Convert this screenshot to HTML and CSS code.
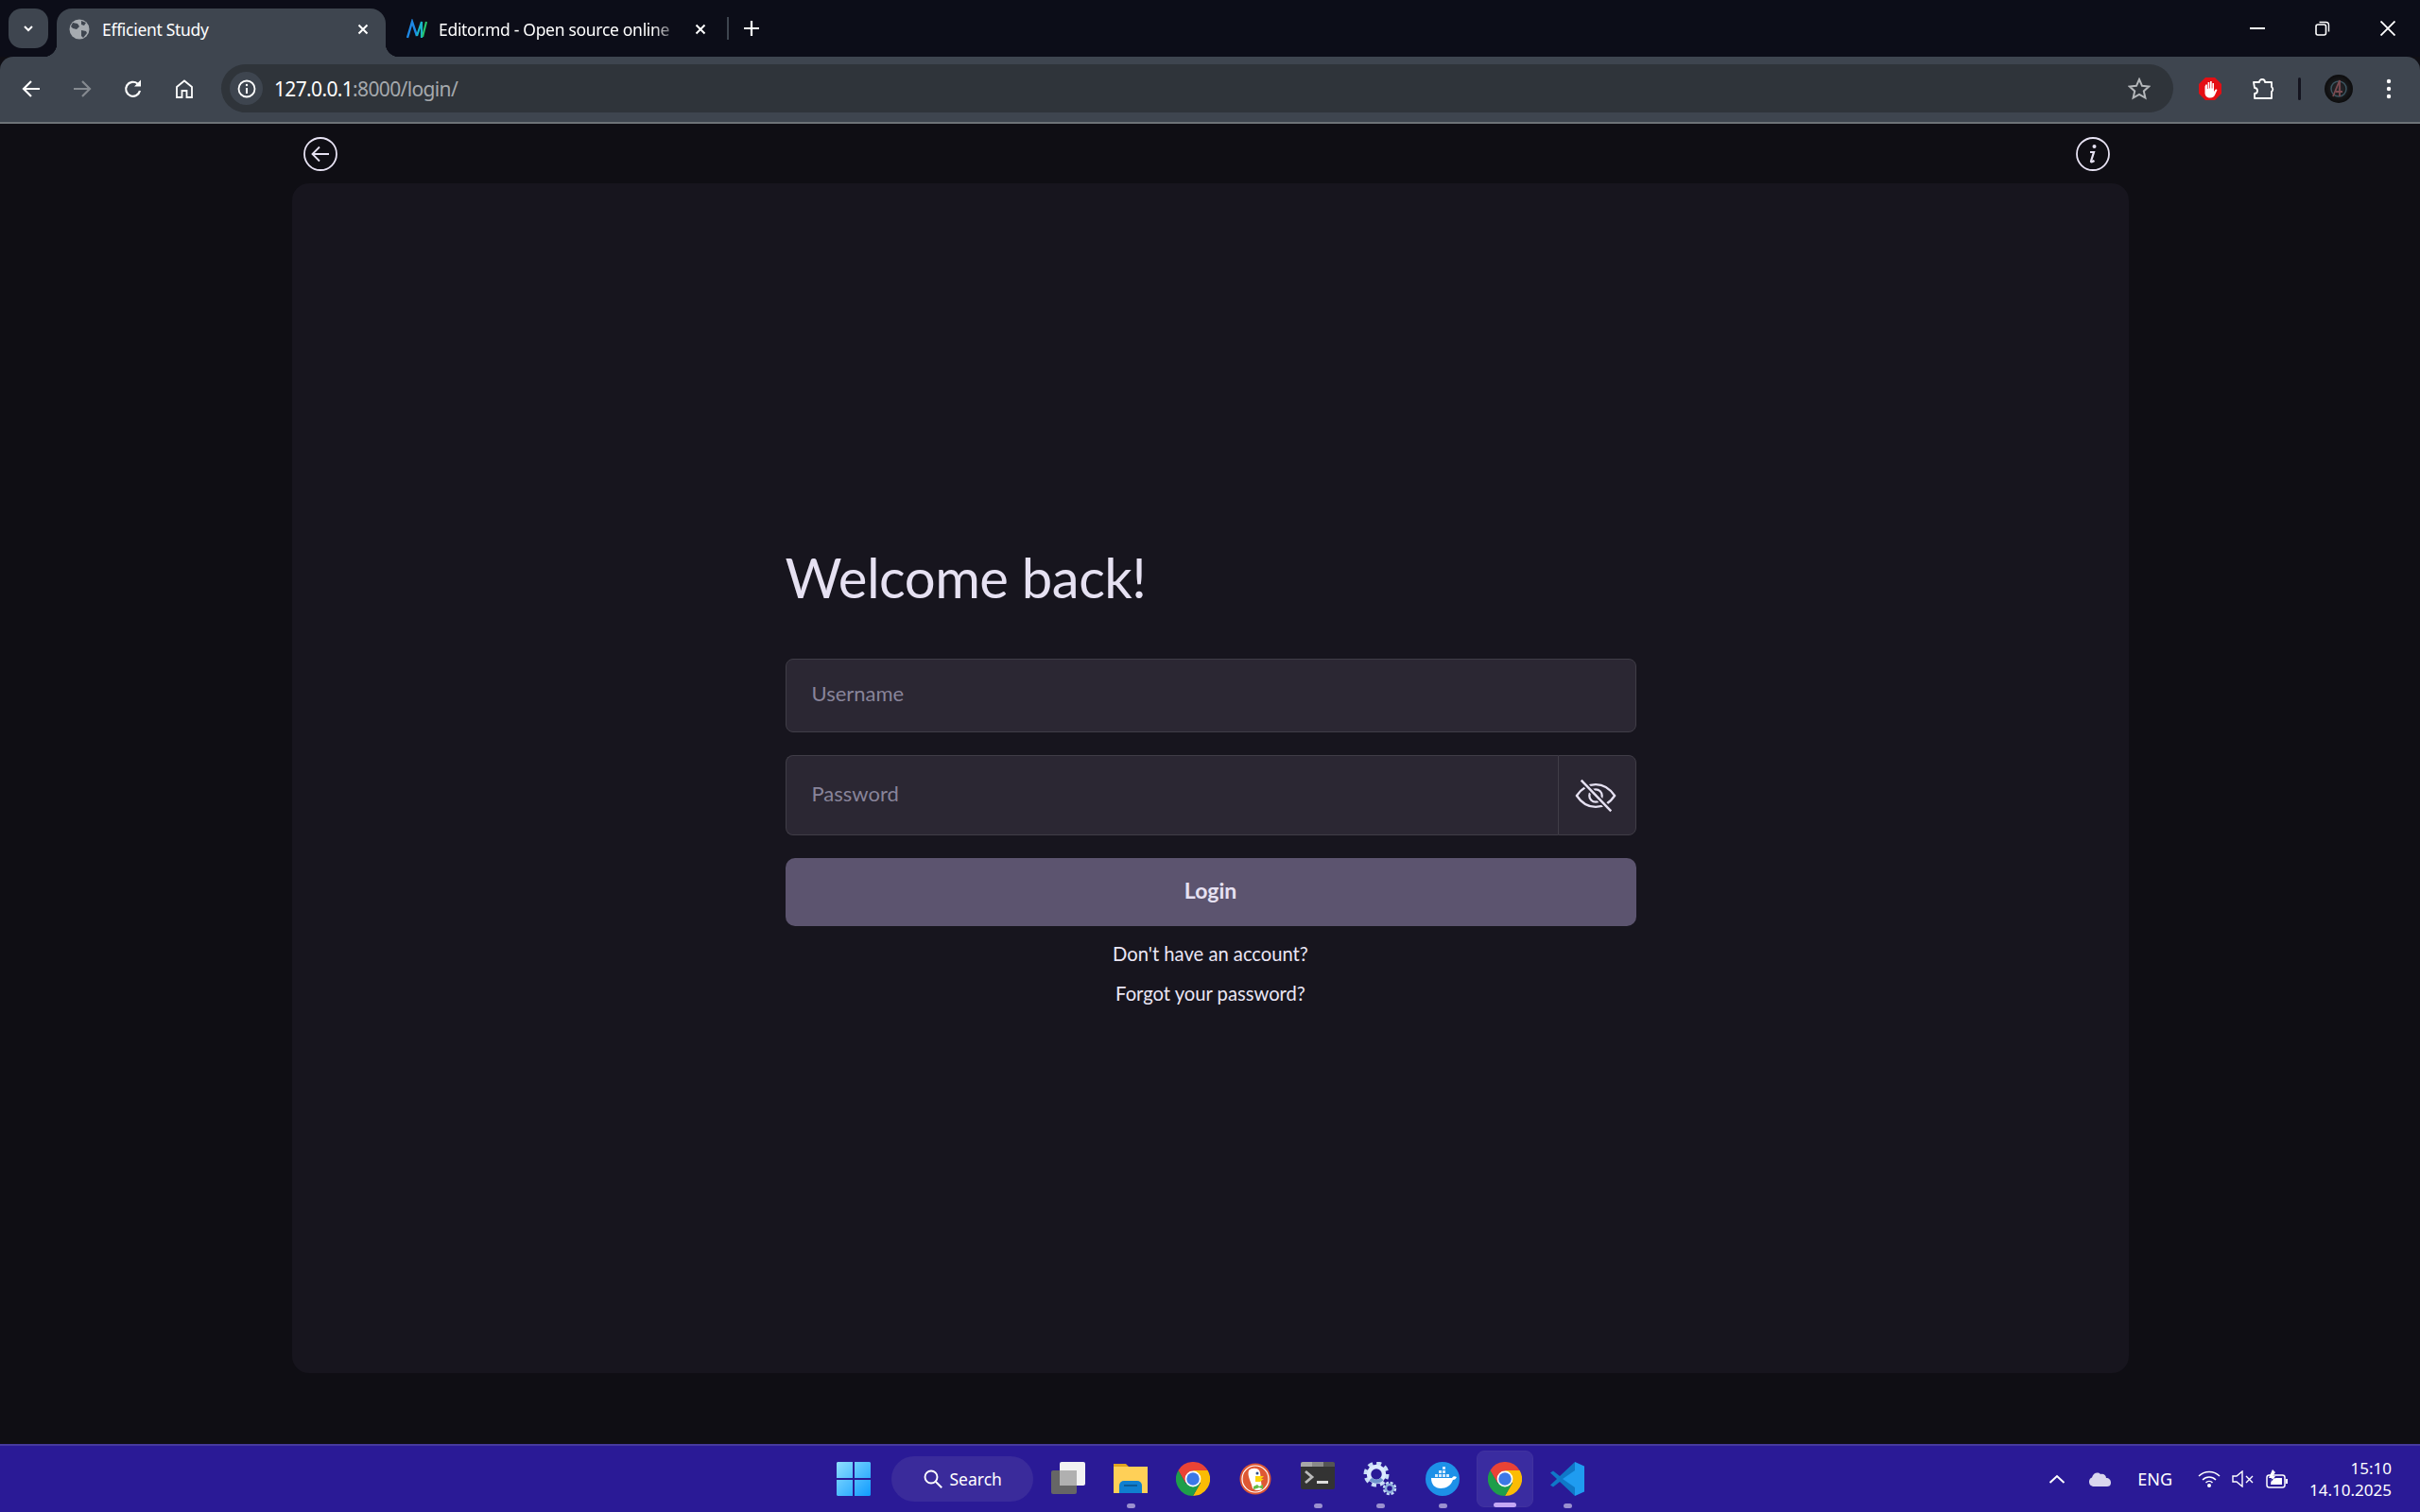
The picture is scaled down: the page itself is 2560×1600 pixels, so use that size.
FILE: index.html
```html
<!DOCTYPE html>
<html lang="en">
<head>
	<meta charset="UTF-8">
	<title>Efficient Study</title>
	<link rel="stylesheet" href="styles.css">
</head>
<body>
	<svg class="defs" width="0" height="0">
		<symbol id="chrome" viewBox="0 0 24 24">
			<path fill="#ea4335" d="M1.6 6A12 12 0 0 1 22.4 6H12L6.8 15Z"/>
			<path fill="#fbbc04" d="M22.4 6A12 12 0 0 1 12 24L17.2 15 12 6Z"/>
			<path fill="#1e9e4a" d="M12 24A12 12 0 0 1 1.6 6L6.8 15H17.2Z"/>
			<circle cx="12" cy="12" r="5.6" fill="#fff"/>
			<circle cx="12" cy="12" r="4.5" fill="#3b78e7"/>
		</symbol>
	</svg>

	<!-- browser top -->
	<div class="tabstrip">
		<button class="tab-menu">
			<svg width="14" height="14" viewBox="0 0 14 14"><path d="M3 5l4 4 4-4" fill="none" stroke="#fff" stroke-width="2"/></svg>
		</button>
		<div class="tab tab-active">
			<svg class="favicon" viewBox="0 0 22 22"><circle cx="11" cy="11" r="10.5" fill="#a6abb0"/><path fill="#3e454f" d="M4 4l5 1 2 3-3 3-4-1-2-2zM13 12l5 1 1 2-4 5-2-2zM13 2l5 2-2 3-3-1z"/></svg>
			<span class="tab-title">Efficient Study</span>
			<svg class="tab-close" viewBox="0 0 12 12"><path d="M1.5 1.500l9 9M10.500 1.500l-9 9" stroke="#fff" stroke-width="2"/></svg>
		</div>
		<div class="tab tab-other">
			<svg class="favicon" viewBox="0 0 22 22"><path d="M1 20L6 3l5 15" fill="none" stroke="#1e88e5" stroke-width="2.400"/><path d="M11 18l5-15v17" fill="none" stroke="#19b5c9" stroke-width="2.200"/><path d="M17 19l4-16" fill="none" stroke="#27c46b" stroke-width="2.200"/></svg>
			<span class="tab-title tab-fade">Editor.md - Open source online</span>
			<svg class="tab-close" viewBox="0 0 12 12"><path d="M1.5 1.500l9 9M10.500 1.500l-9 9" stroke="#fff" stroke-width="2"/></svg>
		</div>
		<div class="tab-sep"></div>
		<svg class="tab-new" viewBox="0 0 16 16"><path d="M8 0v16M0 8h16" stroke="#fff" stroke-width="2.200"/></svg>
		<div class="win-btns">
			<svg viewBox="0 0 16 16"><path d="M0 8h16" stroke="#fff" stroke-width="2"/></svg>
			<svg viewBox="0 0 16 16"><rect x="1" y="4" width="10.500" height="11" rx="2" fill="none" stroke="#fff" stroke-width="1.600"/><path d="M4.500 1.500h7a3 3 0 0 1 3 3v7" fill="none" stroke="#fff" stroke-width="1.400"/></svg>
			<svg viewBox="0 0 16 16"><path d="M.5.500l15 15M15.500.500l-15 15" stroke="#fff" stroke-width="1.800"/></svg>
		</div>
	</div>

	<div class="toolbar">
		<div class="nav-btns">
			<svg viewBox="0 0 20 20"><path d="M19 10H2M10 2l-8 8 8 8" fill="none" stroke="#fff" stroke-width="2.200"/></svg>
			<svg viewBox="0 0 20 20"><path d="M1 10h17M10 2l8 8-8 8" fill="none" stroke="#858a90" stroke-width="2.200"/></svg>
			<svg viewBox="0 0 20 20"><path d="M17 12A7.500 7.500 0 1 1 14.500 4.500" fill="none" stroke="#fff" stroke-width="2.200"/><path d="M11 7.500h7V.5z" fill="#fff"/></svg>
			<svg viewBox="0 0 20 20"><path d="M2 19V8l8-6.500L18 8v11h-5.500v-7h-5v7z" fill="none" stroke="#fff" stroke-width="1.800"/></svg>
		</div>
		<div class="address">
			<span class="site-info">
				<svg viewBox="0 0 20 20"><circle cx="10" cy="10" r="8.500" fill="none" stroke="#fff" stroke-width="1.800"/><path d="M10 9v6" stroke="#fff" stroke-width="2"/><circle cx="10" cy="6" r="1.200" fill="#fff"/></svg>
			</span>
			<span class="url"><b>127.0.0.1</b>:8000/login/</span>
			<svg class="star" viewBox="0 0 24 24"><path d="M12 2l3 6.800 7.300.7-5.500 4.900 1.600 7.200L12 17.900l-6.400 3.700 1.600-7.200L1.700 9.500 9 8.800z" fill="none" stroke="#b4b7ba" stroke-width="2"/></svg>
		</div>
		<div class="ext-btns">
			<svg class="ext-stop" viewBox="0 0 24 24"><path fill="#e40f14" d="M7 0h10l7 7v10l-7 7H7l-7-7V7z"/><path fill="#fff" d="M6.500 9.500v7c0 3 2.500 5 5.500 5 3 0 4.500-1.500 5.500-4l2-4.500-1.500-.7-2 2.700V6h-1.600v5.500h-.7V4h-1.700v7.500h-.7V5H9.600v7h-.7V7.500H7.300z"/></svg>
			<svg class="ext-puzzle" viewBox="0 0 24 24"><path d="M2 5h6a3 3 0 0 1 6 0h7v5a3 3 0 0 1 0 5v7H3v-5a3 3 0 0 0 0-6z" fill="none" stroke="#fff" stroke-width="1.800" stroke-linejoin="round"/></svg>
			<i class="ext-sep"></i>
			<span class="avatar">
				<svg viewBox="0 0 30 30"><circle cx="15" cy="15" r="8" fill="none" stroke="#3c5560" stroke-width="1.500"/><path d="M9 23L16 6v17M12 18h7" fill="none" stroke="#7a4a50" stroke-width="1.800"/></svg>
			</span>
			<svg class="dots" viewBox="0 0 6 24"><circle cx="3" cy="4" r="2.200" fill="#fff"/><circle cx="3" cy="12" r="2.200" fill="#fff"/><circle cx="3" cy="20" r="2.200" fill="#fff"/></svg>
		</div>
	</div>

	<!-- page -->
	<main class="page">
		<div class="page-top">
			<a class="round-icon">
				<svg viewBox="0 0 36 36"><circle cx="18" cy="18" r="17" fill="none" stroke="#e6e1f2" stroke-width="1.800"/><path d="M27 18H10M17 10.500L9.500 18l7.500 7.500" fill="none" stroke="#e6e1f2" stroke-width="1.800"/></svg>
			</a>
			<a class="round-icon">
				<svg viewBox="0 0 36 36"><circle cx="18" cy="18" r="17" fill="none" stroke="#e6e1f2" stroke-width="1.800"/><circle cx="19.500" cy="10" r="2" fill="#e6e1f2"/><path d="M15 16h4l-3 9.500c-.3 1 .8 1.300 3.500-.5" fill="none" stroke="#e6e1f2" stroke-width="2.200"/></svg>
			</a>
		</div>
		<section class="card">
			<form class="login-form">
				<h1 class="title">Welcome back!</h1>
				<input class="field field-user" type="text" placeholder="Username">
				<div class="field-group">
					<input class="field field-pass" type="password" placeholder="Password">
					<button type="button" class="eye-btn">
						<svg viewBox="0 0 46 36"><path d="M2 18C8 9 15 5.500 23 5.500S38 9 44 18c-6 9-13 12.500-21 12.500S8 27 2 18z" fill="none" stroke="#e6e1f2" stroke-width="2.400"/><circle cx="23" cy="18" r="7" fill="none" stroke="#e6e1f2" stroke-width="2.400"/><path d="M6 0l34 35" stroke="#2b2733" stroke-width="6"/><path d="M7 1l33 34" stroke="#e6e1f2" stroke-width="2.600"/></svg>
					</button>
				</div>
				<button type="button" class="login-btn">Login</button>
				<a class="form-link">Don't have an account?</a>
				<a class="form-link">Forgot your password?</a>
			</form>
		</section>
	</main>

	<!-- windows taskbar -->
	<footer class="taskbar">
		<div class="task-spacer"></div>
		<div class="task-apps">
			<span class="slot-start">
				<svg viewBox="0 0 36 36"><defs><linearGradient id="win" x1="0" y1="0" x2="1" y2="1"><stop offset="0" stop-color="#8fe0ff"/><stop offset="1" stop-color="#0f9bff"/></linearGradient></defs><path fill="url(#win)" d="M1 0h16v17H0V1zM19 0h16l1 1v16H19zM0 19h17v17H1l-1-1zM19 19h17v16l-1 1H19z"/></svg>
			</span>
			<span class="search-pill">
				<svg viewBox="0 0 20 20"><circle cx="8" cy="8" r="6.500" fill="none" stroke="#fff" stroke-width="1.900"/><path d="M12.700 12.700l6.500 6.500" stroke="#fff" stroke-width="2"/></svg>
				Search
			</span>
			<span class="slot">
				<svg viewBox="0 0 36 36"><rect x="0" y="9" width="27" height="25" rx="2" fill="#666"/><rect x="9" y="0" width="27" height="25" rx="2" fill="#f2f2f2"/><rect x="9" y="9" width="18" height="16" fill="#b0b0b0"/></svg>
			</span>
			<span class="slot slot-open">
				<svg viewBox="0 0 36 36"><path fill="#e0a420" d="M0 2h13l4 4h19v6H0z"/><path fill="#ffd057" d="M0 5h36v28H0z"/><path fill="#0f7fd0" d="M6 33V25a5 5 0 0 1 5-5h14a5 5 0 0 1 5 5v8z"/><path d="M11 25h14" stroke="#0a4f86" stroke-width="1.500"/></svg>
			</span>
			<span class="slot"><svg viewBox="0 0 24 24"><use href="#chrome"/></svg></span>
			<span class="slot">
				<svg viewBox="0 0 36 36"><circle cx="18" cy="18" r="16.500" fill="#de5833"/><circle cx="18" cy="18" r="14" fill="none" stroke="#fff" stroke-width="1.200"/><path fill="#fff" d="M11 9c3-3 9-3 11 0 2 3 1 7 2 11l1 9c-4 2-8 1-10-1-1-6-6-13-4-19z"/><path fill="#fdd20a" d="M18 15h9l-3 3h3l-4 3h-5z"/><path fill="#65bc46" d="M16 26l4-2 2 2 4-2v5l-4-2-2 1-4 1z"/><circle cx="20" cy="12" r="1.500" fill="#2d4f8e"/></svg>
			</span>
			<span class="slot slot-open">
				<svg viewBox="0 0 36 36"><path fill="#333" d="M0 2a2 2 0 0 1 2-2h32a2 2 0 0 1 2 2v25a2 2 0 0 1-2 2H2a2 2 0 0 1-2-2z"/><path fill="#a8a8a8" d="M0 2a2 2 0 0 1 2-2h10v5H0z"/><path fill="#8a8a8a" d="M12 0h12v5H12z"/><path fill="#555" d="M24 0h10a2 2 0 0 1 2 2v3H24z"/><path d="M5 10l7 6-7 6" fill="none" stroke="#bbb" stroke-width="2.800"/><path fill="#ddd" d="M17 20h12v3H17z"/></svg>
			</span>
			<span class="slot slot-open">
				<svg viewBox="0 0 36 36"><circle cx="14" cy="13" r="11.500" fill="none" stroke="#c9def7" stroke-width="4" stroke-dasharray="5 4"/><circle cx="14" cy="13" r="8" fill="none" stroke="#dceaff" stroke-width="4.500"/><path d="M8 18a8 8 0 0 0 12 0" fill="none" stroke="#6f95cc" stroke-width="4"/><circle cx="28" cy="28" r="6" fill="none" stroke="#c7dcf7" stroke-width="2.500" stroke-dasharray="3 1.700"/><circle cx="28" cy="28" r="4" fill="none" stroke="#8fb0dc" stroke-width="2.500"/></svg>
			</span>
			<span class="slot slot-open">
				<svg viewBox="0 0 36 36"><circle cx="18" cy="18" r="18" fill="#1d91e8"/><path fill="#fff" d="M6 17h22c1-2 3-2 5-1-1 2-2 3-4 3-2 6-7 9-13 9-6 0-10-4-10-11z"/><path fill="#d4e9fb" d="M10 13h3v3h-3zM14 13h3v3h-3zM18 13h3v3h-3zM14 9h3v3h-3zM18 9h3v3h-3zM18 5h3v3h-3zM22 13h3v3h-3z"/></svg>
			</span>
			<span class="slot slot-active"><svg viewBox="0 0 24 24"><use href="#chrome"/></svg></span>
			<span class="slot slot-open">
				<svg viewBox="0 0 36 36"><path fill="#0f78c8" d="M26 0L10 15 3 9.500 0 11.500 7 18l-7 6.500 3 2L10 21l16 15z"/><path fill="#1f9cf0" d="M26 0l10 4.500v27L26 36V9L13 18l13 9z"/></svg>
			</span>
		</div>
		<div class="tray">
			<svg class="tray-chevron" viewBox="0 0 18 10"><path d="M1.500 9L9 2l7.500 7" fill="none" stroke="#fff" stroke-width="2"/></svg>
			<svg class="tray-cloud" viewBox="0 0 24 16"><path fill="#d9d6ee" d="M5 16a5 5 0 0 1-1-9.500C5 2 10 0 13 3c3-1 6 1 6 4 3 0 5 2 5 5s-2 4-4 4z"/></svg>
			<span class="tray-lang">ENG</span>
			<svg class="tray-wifi" viewBox="0 0 24 18"><path d="M1 6c6-6 16-6 22 0M5 10c4-4 10-4 14 0M8.500 13c2-2 5-2 7 0" fill="none" stroke="#fff" stroke-width="1.500"/><circle cx="12" cy="16" r="2" fill="#fff"/></svg>
			<svg class="tray-sound" viewBox="0 0 24 18"><path d="M1 6h4l6-5v16l-6-5H1z" fill="none" stroke="#fff" stroke-width="1.400"/><path d="M15 6l7 7M22 6l-7 7" stroke="#fff" stroke-width="1.400"/></svg>
			<svg class="tray-battery" viewBox="0 0 24 20"><rect x="1" y="6" width="19" height="13" rx="2.500" fill="none" stroke="#fff" stroke-width="1.500"/><path d="M22 10v5" stroke="#fff" stroke-width="2"/><path fill="#fff" d="M7 0L3 9h3l-1 5 5-7H7l3-4zM6 10l5-1h6v7H5z"/></svg>
			<div class="clock">
				<span>15:10</span>
				<span>14.10.2025</span>
			</div>
		</div>
	</footer>
</body>
</html>
```

FILE: styles.css
```css
*{margin:0; padding:0; box-sizing:border-box;}
html,body{height:100%;}
body{display:flex; flex-direction:column; height:1600px; overflow:hidden; background:#0f0e14; font-family:"Noto Sans",sans-serif;}
svg{display:block; flex:none;}
.defs{position:absolute;}

/* tab strip */
.tabstrip{display:flex; align-items:flex-end; height:60px; background:#0c0d18; color:#fff;}
.tab-menu{width:42px; height:42px; margin:0 9px 9px; border:0; border-radius:14px; background:#3e454f; display:flex; align-items:center; justify-content:center;}
.tab{display:flex; align-items:center; height:51px; padding-bottom:7px;}
.tab-active{position:relative; width:348px; padding-left:13px; padding-right:18px; background:#3e454f; border-radius:16px 16px 0 0;}
.tab-active::before,.tab-active::after{content:""; position:absolute; bottom:0; width:14px; height:14px;}
.tab-active::before{left:-14px; background:radial-gradient(circle at 0 0,transparent 14px,#3e454f 14.5px);}
.tab-active::after{right:-14px; background:radial-gradient(circle at 100% 0,transparent 14px,#3e454f 14.5px);}
.favicon{width:22px; height:22px;}
.tab-title{flex:1; margin-left:13px; font-size:17.5px; white-space:nowrap; overflow:hidden; letter-spacing:-.3px;}
.tab-close{width:12px; height:12px;}
.tab-other{width:340px; margin-left:10px; padding-left:12px; padding-right:11px;}
.tab-other .tab-title{margin:0 14px 0 12px;}
.tab-fade{-webkit-mask-image:linear-gradient(to right,#000 88%,transparent);}
.tab-sep{width:2px; height:24px; margin:0 0 18px 11px; background:#3e454f;}
.tab-new{width:16px; height:16px; margin:0 0 22px 16px;}
.win-btns{display:flex; gap:53px; margin:0 26px 22px auto;}
.win-btns svg{width:16px; height:16px;}

/* toolbar */
.toolbar{display:flex; align-items:center; height:71px; padding-bottom:2px; background:#3e454f; border-bottom:2px solid #6e7378; border-radius:14px 14px 0 0;}
.nav-btns{display:flex; gap:34px; margin-left:23px;}
.nav-btns svg{width:20px; height:20px;}
.address{display:flex; align-items:center; width:2065px; height:51px; margin-left:29px; padding:0 9px; background:#2f343a; border-radius:26px;}
.site-info{display:flex; align-items:center; justify-content:center; width:35px; height:35px; border-radius:50%; background:#3e454f;}
.site-info svg{width:20px; height:20px;}
.url{margin-left:12px; font-size:21px; color:#a5a9ad; letter-spacing:-.65px;}
.url b{font-weight:400; color:#fff;}
.star{width:24px; height:24px; margin:0 0 0 auto; margin-right:15px;}
.ext-btns{display:flex; align-items:center; margin-left:27px;}
.ext-stop{width:24px; height:24px;}
.ext-puzzle{width:24px; height:24px; margin-left:32px;}
.ext-sep{width:3px; height:24px; margin-left:25px; background:#14141f; border-radius:2px;}
.avatar{width:30px; height:30px; margin-left:25px; border-radius:50%; background:radial-gradient(circle,#2a2a2e,#000);}
.dots{width:6px; height:24px; margin-left:35px;}

/* page */
.page{flex:1; display:flex; flex-direction:column; padding:0 308px 75px 309px;}
.page-top{display:flex; justify-content:space-between; align-items:center; height:63px; padding:1px 20px 0 12px;}
.round-icon svg{width:36px; height:36px;}
.card{flex:1; display:flex; justify-content:center; padding-top:379px; background:#17151e; border-radius:18px;}
.login-form{display:flex; flex-direction:column; width:900px;}
.title{height:124px; font-family:"Lato",sans-serif; font-size:58px; line-height:76px; font-weight:400; letter-spacing:-.5px; color:#e6e1f2;}
.field{height:78px; padding:0 27px 6px; background:#2b2733; border:1px solid #403d47; border-radius:8px; color:#e6e1f2; font-family:"Lato",sans-serif; font-size:22px; outline:none;}
.field::placeholder{color:#88849a; opacity:1;}
.field-group{display:flex; height:85px; margin:24px 0;}
.field-pass{flex:1; height:100%; padding-bottom:4px; border-right:0; border-radius:8px 0 0 8px;}
.eye-btn{display:flex; align-items:center; justify-content:center; width:83px; background:#2b2733; border:1px solid #403d47; border-radius:0 8px 8px 0;}
.eye-btn svg{width:44px; height:36px; margin-right:2px;}
.login-btn{height:72px; padding-bottom:4px; background:#5c546f; border:0; border-radius:10px; color:#e6e1f2; font-family:"Lato",sans-serif; font-size:23px; font-weight:700;}
.form-link{margin-top:15px; height:27px; line-height:27px; text-align:center; font-family:"Lato",sans-serif; font-size:20.2px; color:#eae6f5;}
.login-btn + .form-link{margin-top:16px;}

/* taskbar */
.taskbar{display:grid; grid-template-columns:1fr auto 1fr; height:72px; background:#2a1a96; border-top:2px solid #463a9e; color:#fff;}
.task-apps{display:flex; align-items:center;}
.slot-start{display:flex; justify-content:center; width:66px;}
.slot-start svg{width:36px; height:36px;}
.search-pill{display:flex; align-items:center; gap:8px; width:150px; height:48px; margin:0 4px 0 7px; padding-left:34px; border-radius:24px; background:#3a2b9b; font-size:17.5px;}
.search-pill svg{width:20px; height:20px;}
.slot{position:relative; display:flex; align-items:center; justify-content:center; width:66px; height:60px;}
.slot svg{width:36px; height:36px;}
.slot-open::after,.slot-active::after{content:""; position:absolute; bottom:-1px; left:50%; width:9px; height:5px; margin-left:-4px; border-radius:3px; background:#9a90cf;}
.slot-active{width:60px; margin:0 3px; background:#3a2ca0; border-radius:8px; border:1px solid #40329f;}
.slot-active::after{width:24px; margin-left:-12px; background:#c4a8f5;}
.tray{display:flex; align-items:center; justify-content:flex-end; padding-right:30px;}
.tray-chevron{width:18px; height:10px;}
.tray-cloud{width:24px; height:16px; margin-left:24px;}
.tray-lang{margin-left:28px; font-size:18px;}
.tray-wifi{width:24px; height:18px; margin-left:27px;}
.tray-sound{width:24px; height:18px; margin-left:12px;}
.tray-battery{width:24px; height:20px; margin-left:12px;}
.clock{display:flex; flex-direction:column; align-items:flex-end; gap:1px; margin-left:22px; font-size:17px; line-height:22px;}
```
